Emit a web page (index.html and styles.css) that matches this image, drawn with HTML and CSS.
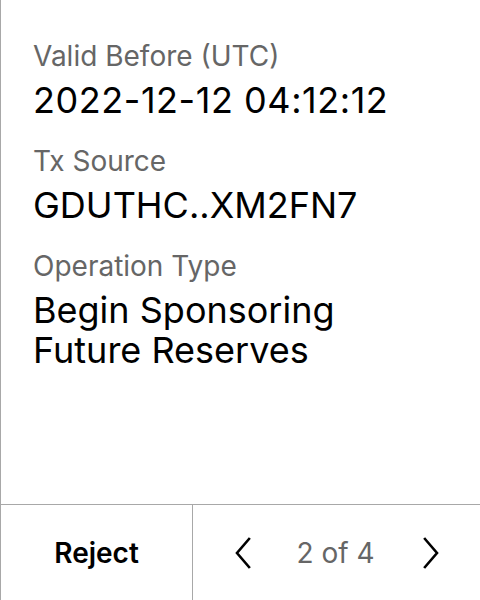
FILE: index.html
```html
<!DOCTYPE html>
<html>
<head>
<meta charset="utf-8">
<link rel="stylesheet" href="styles.css">
</head>
<body>
<div class="screen">
  <div class="details">
    <div class="field">
      <div class="label">Valid Before (UTC)</div>
      <div class="value num">2022-12-12 04:12:12</div>
    </div>
    <div class="field">
      <div class="label">Tx Source</div>
      <div class="value">GDUTHC..XM2FN7</div>
    </div>
    <div class="field">
      <div class="label">Operation Type</div>
      <div class="value">Begin Sponsoring<br>Future Reserves</div>
    </div>
  </div>
  <div class="footer">
    <div class="reject">Reject</div>
    <div class="pager">
      <svg class="chev" width="18" height="32" viewBox="0 0 18 32"><path d="M15 2 L3 16 L15 30" fill="none" stroke="#000" stroke-width="2.6" stroke-linecap="square"/></svg>
      <span class="count">2 of 4</span>
      <svg class="chev" width="18" height="32" viewBox="0 0 18 32"><path d="M3 2 L15 16 L3 30" fill="none" stroke="#000" stroke-width="2.6" stroke-linecap="square"/></svg>
    </div>
  </div>
</div>
</body>
</html>
```

FILE: styles.css
```css
html, body {
  margin: 0;
  padding: 0;
  background: #fff;
}
.screen {
  width: 480px;
  height: 600px;
  box-sizing: border-box;
  border-left: 1px solid #a8a8a8;
  display: flex;
  flex-direction: column;
  font-family: Inter, "Noto Sans", sans-serif;
  color: #000;
}
.details {
  flex: 1;
  padding: 39px 0 0 32px;
  display: flex;
  flex-direction: column;
  gap: 24px;
}
.label {
  font-size: 28px;
  line-height: 34px;
  color: #666;
}
.value {
  font-size: 36px;
  line-height: 40px;
  margin-top: 7px;
}
.num {
  letter-spacing: 0.55px;
}
.footer {
  height: 95px;
  flex: none;
  border-top: 1px solid #a8a8a8;
  display: flex;
}
.reject {
  width: 191px;
  border-right: 1px solid #a8a8a8;
  display: flex;
  align-items: center;
  justify-content: center;
  font-size: 28px;
  font-weight: 600;
}
.pager {
  flex: 1;
  display: flex;
  align-items: center;
  justify-content: space-between;
  padding: 0 40px 0 41px;
}
.count {
  font-size: 28px;
  color: #666;
  margin-right: 3px;
}
```
